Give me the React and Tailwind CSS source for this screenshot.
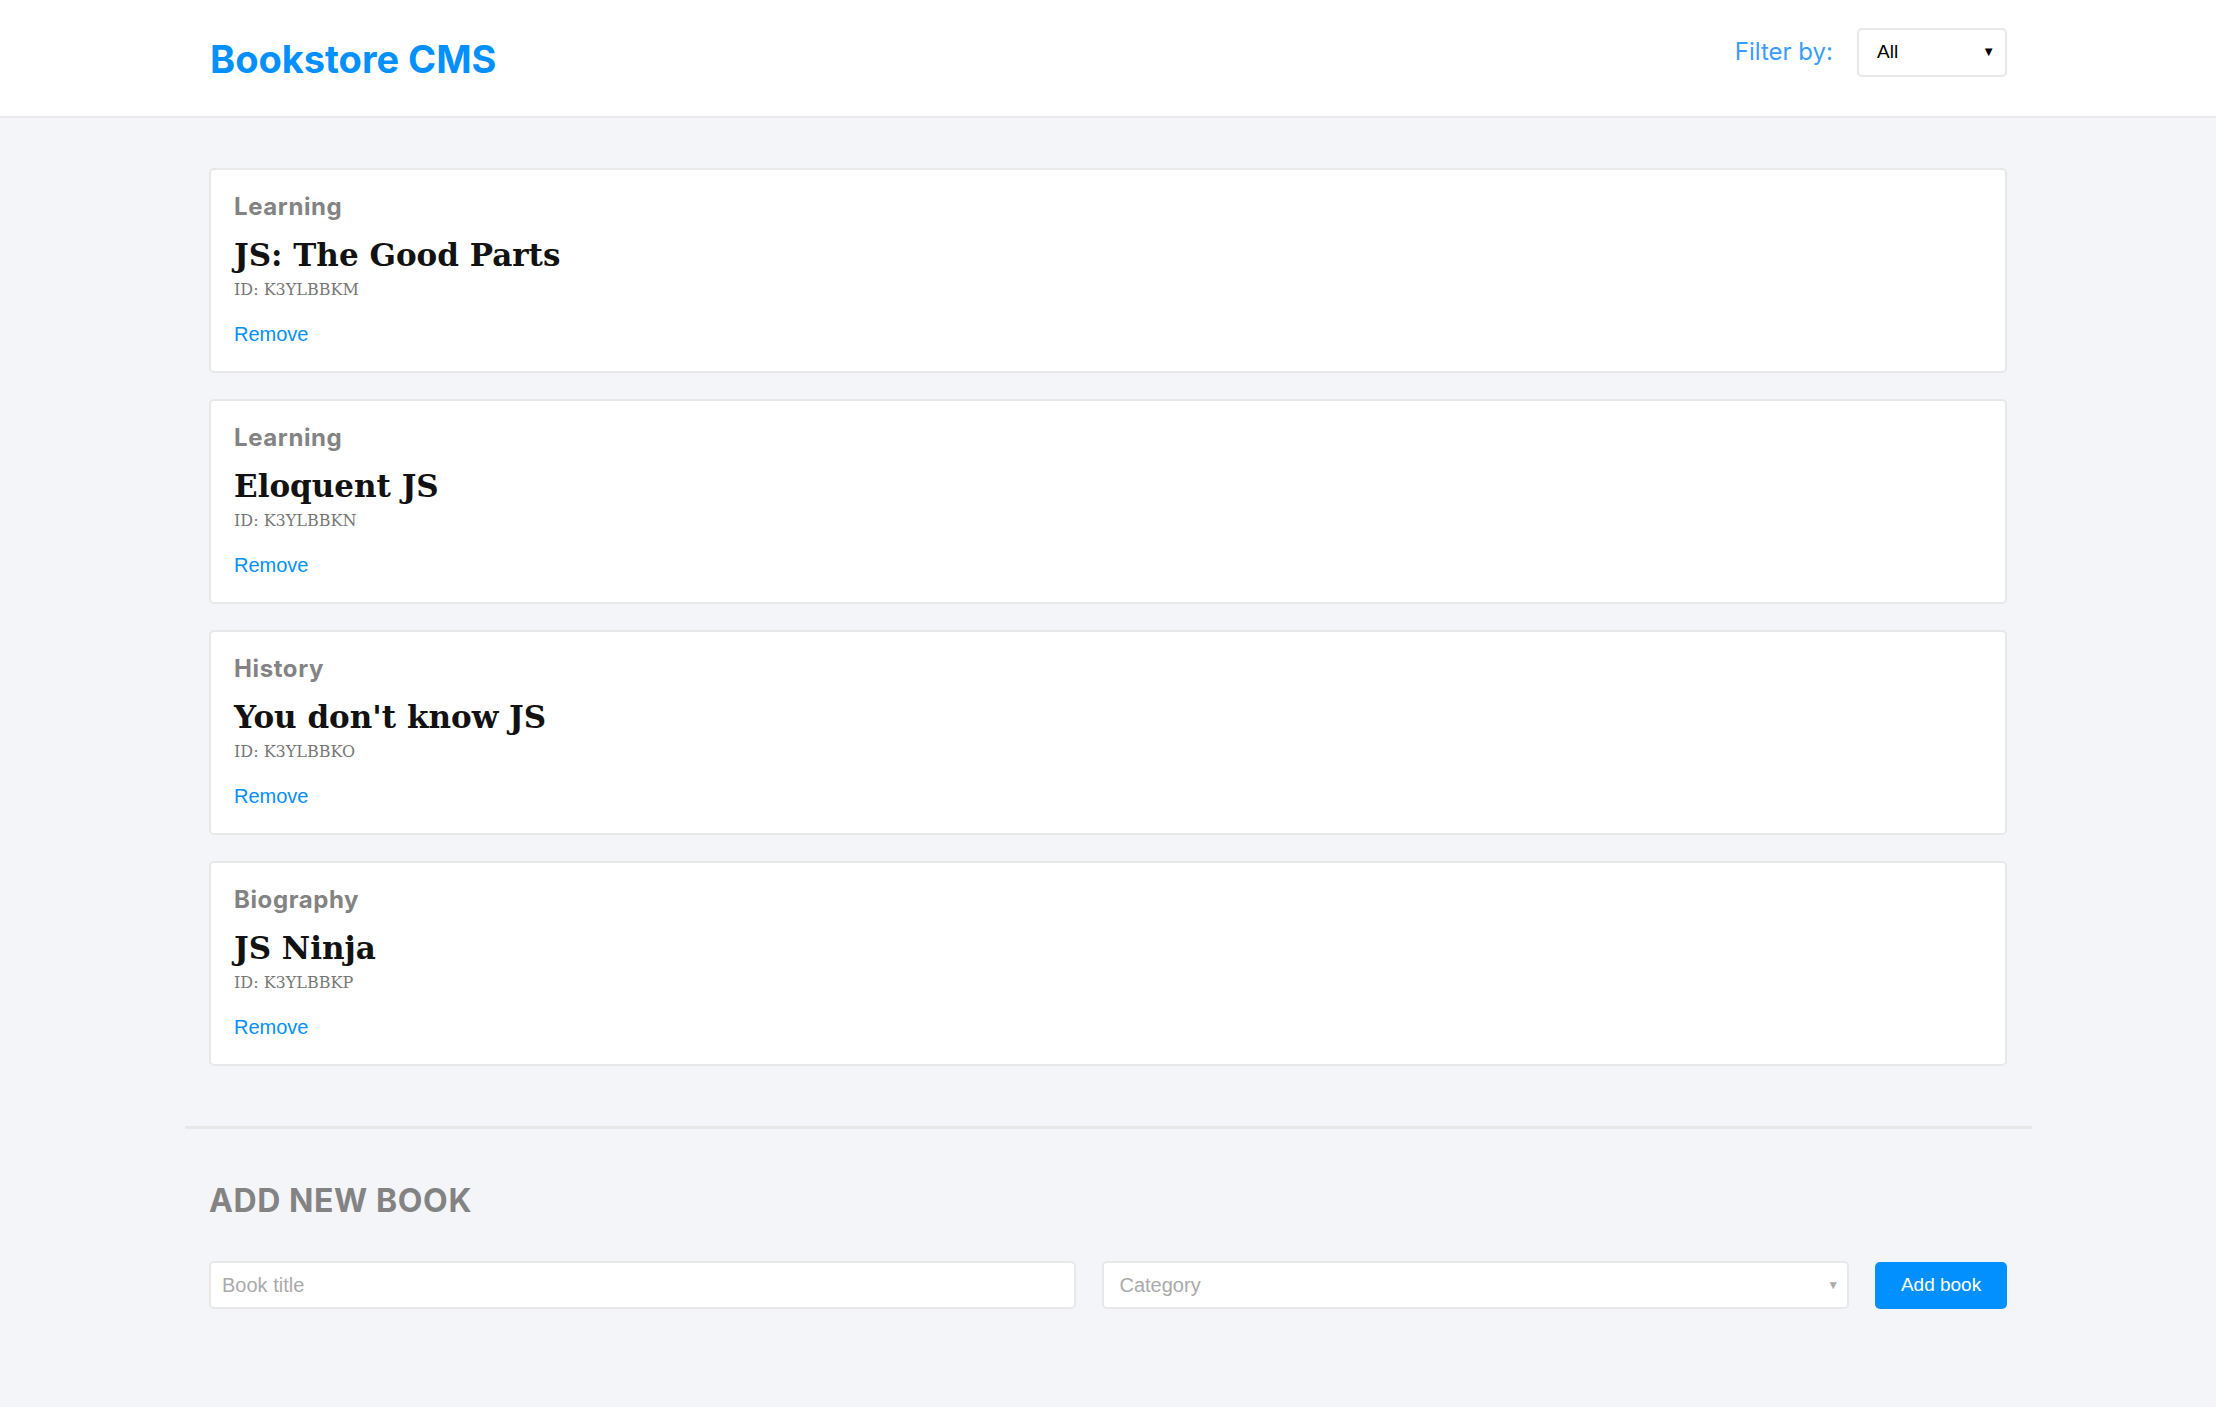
import React from 'react';

const books = [
  { id: 'K3YLBBKM', title: 'JS: The Good Parts', category: 'Learning' },
  { id: 'K3YLBBKN', title: 'Eloquent JS', category: 'Learning' },
  { id: 'K3YLBBKO', title: "You don't know JS", category: 'History' },
  { id: 'K3YLBBKP', title: 'JS Ninja', category: 'Biography' },
];

const sans = "font-['Inter',sans-serif]";
const slab = "font-['DejaVu_Serif',serif]";
const arial = "font-['Liberation_Sans',Arial,sans-serif]";

const Book = ({ book }) => (
  <div className="h-[205px] bg-white border-2 border-[#e8e8e8] rounded-[5px] px-[23px] pt-[22px]">
    <p className={`${sans} font-bold text-[24px] tracking-[0.6px] leading-[30px] text-[#838383]`}>{book.category}</p>
    <h2 className={`${slab} font-bold text-[31px] leading-[48px] mt-[9px] text-[#121212]`}>{book.title}</h2>
    <p className={`${slab} text-[16px] leading-[22px] text-[#777]`}>ID: {book.id}</p>
    <button className={`${arial} block mt-[21px] text-[20px] leading-[24px] text-[#0290ff]`}>Remove</button>
  </div>
);

export default function App() {
  return (
    <div className="min-h-[1407px] bg-[#f4f5f9]">
      <header className="h-[118px] bg-white border-b-2 border-[#e8e8e8]">
        <div className="w-[1798px] mx-auto h-full flex items-center justify-between">
          <h1 className={`${sans} font-bold text-[38px] text-[#0290ff] mt-[2px] ml-px`}>Bookstore CMS</h1>
          <div className="flex items-center gap-[24px] mb-[12px]">
            <span className={`${sans} text-[24px] text-[#3b9cff]`}>Filter by:</span>
            <div className={`${arial} w-[150px] h-[49px] border-2 border-[#e8e8e8] rounded-[5px] bg-white flex items-center justify-between pl-[18px] pr-[10px] text-[19px] text-black`}>
              <span>All</span>
              <span className="text-[13px]">▼</span>
            </div>
          </div>
        </div>
      </header>

      <main className="w-[1798px] mx-auto pt-[50px] flex flex-col gap-[26px]">
        {books.map((b) => (
          <Book key={b.id} book={b} />
        ))}
      </main>

      <div className="w-[1847px] mx-auto mt-[60px] border-t-[3px] border-[#e8e8e8]" />

      <section className="w-[1798px] mx-auto pt-[52px]">
        <h3 className={`${sans} font-bold text-[32px] tracking-[0.6px] leading-[40px] text-[#838383] uppercase`}>Add new book</h3>
        <div className="mt-[40px] flex items-center gap-[26px]">
          <input
            placeholder="Book title"
            className={`${arial} w-[867px] h-[48px] bg-white border-2 border-[#e8e8e8] rounded-[5px] px-[11px] text-[20px] placeholder:text-[#aaa] outline-none`}
          />
          <div className={`${arial} w-[748px] h-[48px] bg-white border-2 border-[#e8e8e8] rounded-[5px] pl-[16px] pr-[8px] flex items-center justify-between text-[20px] text-[#aaa]`}>
            <span>Category</span>
            <span className="text-[12px]">▼</span>
          </div>
          <button className={`${arial} w-[132px] h-[47px] bg-[#0290ff] rounded-[5px] text-white text-[19px]`}>Add book</button>
        </div>
      </section>
    </div>
  );
}
